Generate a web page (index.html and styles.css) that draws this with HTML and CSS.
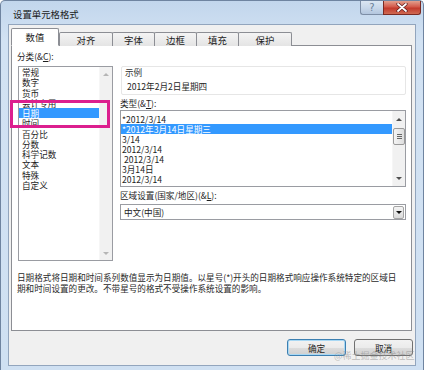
FILE: index.html
```html
<!DOCTYPE html>
<html lang="zh-CN">
<head>
    <meta charset="UTF-8">
    <meta name="viewport" content="width=device-width, initial-scale=1.0">
    <title>设置单元格格式</title>
    <link rel="stylesheet" href="styles.css">
</head>
<body>
    <div class="window">
        <div class="titlebar">
            <span class="title">设置单元格格式</span>
            <div class="caption-buttons">
                <div class="cap-btn help">?</div>
                <div class="cap-btn close">
                    <svg width="12" height="9" viewBox="0 0 12 9">
                        <path d="M2 1 L10 8 M10 1 L2 8" stroke="#5a1a1a" stroke-width="3.2" stroke-linecap="round"/>
                        <path d="M2 1 L10 8 M10 1 L2 8" stroke="#fff" stroke-width="1.8" stroke-linecap="round"/>
                    </svg>
                </div>
            </div>
        </div>

        <div class="dialog">
            <div class="tabs">
                <div class="tab active">数值</div>
                <div class="tab wide">对齐</div>
                <div class="tab">字体</div>
                <div class="tab">边框</div>
                <div class="tab">填充</div>
                <div class="tab wide">保护</div>
            </div>

            <div class="page">
                <div class="main">
                    <div class="col-left">
                        <div class="label">分类(&amp;<u>C</u>):</div>
                        <div class="listbox category">
                            <ul class="items">
                                <li>常规</li>
                                <li>数字</li>
                                <li>货币</li>
                                <li>会计专用</li>
                                <li class="selected">日期</li>
                                <li>时间</li>
                                <li>百分比</li>
                                <li>分数</li>
                                <li>科学记数</li>
                                <li>文本</li>
                                <li>特殊</li>
                                <li>自定义</li>
                            </ul>
                            <div class="scrollbar disabled">
                                <div class="sb-btn"><span class="arrow-up"></span></div>
                                <div class="sb-track"></div>
                                <div class="sb-btn"><span class="arrow-down"></span></div>
                            </div>
                        </div>
                    </div>

                    <div class="col-right">
                        <div class="sample">
                            <div class="sample-title">示例</div>
                            <div class="sample-value">2012年2月2日星期四</div>
                        </div>

                        <div class="label gap">类型(&amp;<u>T</u>):</div>
                        <div class="listbox types">
                            <ul class="items">
                                <li>*2012/3/14</li>
                                <li class="selected">*2012年3月14日星期三</li>
                                <li>3/14</li>
                                <li>2012/3/14</li>
                                <li>&nbsp;2012/3/14</li>
                                <li>3月14日</li>
                                <li>2012/3/14</li>
                            </ul>
                            <div class="scrollbar">
                                <div class="sb-btn"><span class="arrow-up"></span></div>
                                <div class="sb-track">
                                    <div class="sb-thumb">
                                        <span></span><span></span><span></span>
                                    </div>
                                </div>
                                <div class="sb-btn"><span class="arrow-down"></span></div>
                            </div>
                        </div>

                        <div class="label gap">区域设置(国家/地区)(&amp;<u>L</u>):</div>
                        <div class="combo">
                            <span class="combo-text">中文(中国)</span>
                            <div class="combo-btn"><span class="arrow-down dark"></span></div>
                        </div>
                    </div>
                </div>

                <p class="description">日期格式将日期和时间系列数值显示为日期值。以星号(*)开头的日期格式响应操作系统特定的区域日<br>期和时间设置的更改。不带星号的格式不受操作系统设置的影响。</p>
            </div>

            <div class="footer">
                <button class="btn default">确定</button>
                <button class="btn">取消</button>
            </div>
        </div>
    </div>

    <div class="marker"></div>
    <div class="watermark">@稀土掘金技术社区</div>
</body>
</html>
```

FILE: styles.css
```css
body {
    margin: 0;
    width: 424px;
    height: 370px;
    overflow: hidden;
    background-color: #fff;
    font-family: "Noto Sans CJK SC", "Liberation Sans", sans-serif;
    font-size: 8.6px;
    color: #1e1e1e;
    position: relative;
}

.window {
    height: 370px;
    box-sizing: border-box;
    border: 1px solid #6f84a0;
    border-bottom: none;
    border-radius: 5px 5px 0 0;
    background: linear-gradient(#c2d6ec, #d2e2f3 40px, #cfe0f2);
    padding: 0 7px 4px 7px;
    display: flex;
    flex-direction: column;
}

/* title bar */
.titlebar {
    height: 23px;
    display: flex;
    align-items: flex-start;
}

.title {
    padding: 7px 0 0 5px;
    font-size: 9.4px;
    line-height: 12px;
    color: #1a1a1a;
}

.caption-buttons {
    margin-left: auto;
    margin-right: -5px;
    display: flex;
}

.cap-btn {
    height: 14px;
    box-sizing: border-box;
    display: flex;
    align-items: center;
    justify-content: center;
    border: 1px solid #7d8ea6;
    border-top: none;
}

.help {
    width: 23px;
    border-radius: 0 0 0 3px;
    background: linear-gradient(#dbe6f2, #c9d8ea 50%, #b3c6de);
    color: #6b7f99;
    font-family: "DejaVu Sans", sans-serif;
    font-size: 10px;
    line-height: 10px;
    border-right: none;
}

.close {
    width: 38px;
    border-radius: 0 0 3px 0;
    background: linear-gradient(#e2a08e, #d3594a 45%, #c23a2c 55%, #cf6a52);
    border-color: #7a2a22;
}

/* dialog body */
.dialog {
    flex: 1;
    background-color: #f0f0f0;
    border: 1px solid #92a5bd;
    padding: 4px 2px 0 2px;
    display: flex;
    flex-direction: column;
}

.tabs {
    display: flex;
    align-items: flex-end;
    height: 17px;
    margin-bottom: -1px;
    position: relative;
    z-index: 1;
}

.tab {
    width: 43px;
    height: 14px;
    box-sizing: border-box;
    border: 1px solid #8c8e94;
    border-bottom: none;
    margin-left: -1px;
    background: linear-gradient(#f4f4f4, #e4e4e4);
    text-align: center;
    line-height: 14px;
    font-size: 9.4px;
    color: #222;
    border-radius: 2px 2px 0 0;
}

.tab.wide {
    width: 54px;
}

.tab.active {
    width: 48px;
    height: 18px;
    margin-left: 0;
    background: #fff;
    line-height: 17px;
    margin-right: 1px;
    border-bottom: 1px solid #fff;
}

.page {
    height: 286px;
    box-sizing: border-box;
    background-color: #fff;
    border: 1px solid #8c8e94;
    margin-right: 1px;
    padding: 5px 5px 0 5px;
}

.main {
    display: flex;
    gap: 7px;
}

.label {
    line-height: 11px;
    white-space: nowrap;
}

.label u {
    text-decoration: underline;
}

.label.gap {
    margin-top: 3px;
}

.col-left {
    width: 96px;
}

.col-right {
    width: 286px;
    padding-top: 15px;
}

/* list boxes */
.listbox {
    display: flex;
    box-sizing: border-box;
    border: 1px solid #9a9ca2;
    background-color: #fff;
}

.items {
    flex: 1;
    list-style: none;
    margin: 0;
    padding: 0;
    white-space: nowrap;
    overflow: hidden;
}

.category {
    margin: 4px 0 0 1px;
    width: 95px;
    height: 195px;
}

.category .items li {
    height: 10.25px;
    line-height: 10.25px;
    padding-left: 3px;
}

.types {
    margin-top: 1px;
    height: 77px;
}

.types .items {
    padding-top: 3px;
}

.types .items li {
    height: 10px;
    line-height: 10px;
    padding-left: 1px;
}

.items li.selected {
    background-color: #3399ff;
    color: #fff;
}

.category .items li.selected {
    margin-left: 0;
}

.scrollbar {
    width: 12px;
    display: flex;
    flex-direction: column;
    background-color: #f1f1f1;
    border-left: 1px solid #f6f6f6;
}

.sb-btn {
    height: 16px;
    display: flex;
    align-items: center;
    justify-content: center;
}

.category .sb-btn {
    height: 14px;
}

.sb-track {
    flex: 1;
    padding-top: 1px;
}

.sb-thumb {
    height: 17px;
    margin: 0 0 0 0;
    box-sizing: border-box;
    border: 1px solid #9a9a9a;
    border-radius: 2px;
    background: linear-gradient(90deg, #f4f4f4, #dedede);
    display: flex;
    flex-direction: column;
    align-items: center;
    justify-content: center;
    gap: 1px;
}

.sb-thumb span {
    width: 5px;
    height: 1px;
    background-color: #666;
}

.arrow-up,
.arrow-down {
    width: 0;
    height: 0;
    border-left: 3px solid transparent;
    border-right: 3px solid transparent;
}

.arrow-up {
    border-bottom: 3px solid #505050;
}

.arrow-down {
    border-top: 3px solid #505050;
}

.disabled .arrow-up {
    border-bottom-color: #b5b5b5;
}

.disabled .arrow-down {
    border-top-color: #b5b5b5;
}

.arrow-down.dark {
    border-top-color: #111;
}

/* sample group */
.sample {
    margin-left: 1px;
    height: 29px;
    box-sizing: border-box;
    border: 1px solid #e6e6e6;
    border-radius: 2px;
    padding: 0 3px;
}

.sample-title {
    line-height: 10px;
    color: #333;
}

.sample-value {
    margin-top: 4px;
    padding-left: 2px;
    line-height: 10px;
}

/* combo box */
.combo {
    margin-top: 3px;
    height: 16px;
    box-sizing: border-box;
    border: 1px solid #9a9ca2;
    display: flex;
    align-items: center;
    background-color: #fff;
}

.combo-text {
    flex: 1;
    padding-left: 3px;
    line-height: 14px;
}

.combo-btn {
    width: 11px;
    height: 13px;
    margin-right: 1px;
    box-sizing: border-box;
    border: 1px solid #a5a5a5;
    border-radius: 2px;
    background: linear-gradient(#f4f4f4, #dadada);
    display: flex;
    align-items: center;
    justify-content: center;
}

.description {
    margin: 11px 0 0 0;
    line-height: 11px;
    white-space: nowrap;
    color: #2a2a2a;
}

/* footer */
.footer {
    display: flex;
    justify-content: flex-end;
    gap: 8px;
    padding: 8px 0 0 0;
}

.btn {
    width: 59px;
    height: 17px;
    box-sizing: border-box;
    border: 1px solid #707070;
    border-radius: 3px;
    background: linear-gradient(#f2f2f2, #ebebeb 50%, #dddddd 51%, #cfcfcf);
    font-family: "Noto Sans CJK SC", sans-serif;
    font-size: 8.6px;
    line-height: 14px;
    padding: 0;
    color: #1e1e1e;
    cursor: pointer;
}

.btn.default {
    border-color: #3c7fb1;
    box-shadow: inset 0 0 0 1px #a8d8f4;
}

/* annotation overlays */
.marker {
    position: absolute;
    left: 10px;
    top: 100px;
    width: 100px;
    height: 28px;
    box-sizing: border-box;
    border: 3px solid #dc1f8e;
}

.watermark {
    position: absolute;
    left: 334px;
    top: 350px;
    font-size: 9px;
    line-height: 12px;
    color: rgba(140, 140, 140, 0.55);
    white-space: nowrap;
}
```
